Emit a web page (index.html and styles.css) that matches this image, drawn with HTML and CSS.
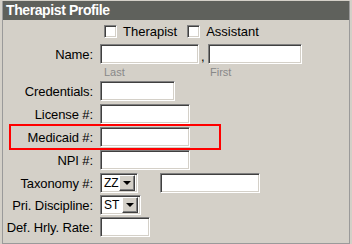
FILE: index.html
```html
<!DOCTYPE html>
<html lang="en">
<head>
  <meta charset="UTF-8" />
  <title>Therapist Profile</title>
  <link rel="stylesheet" href="styles.css">
</head>
<body>
  <div class="panel">
    <div class="panel-head">Therapist Profile</div>

    <div class="panel-body">
      <!-- Role checkboxes -->
      <div class="checks">
        <label class="check"><input type="checkbox" /> Therapist</label>
        <label class="check"><input type="checkbox" /> Assistant</label>
      </div>

      <!-- Name -->
      <div class="row row-name">
        <span class="lbl">Name:</span>
        <input type="text" class="txt w-last" />
        <span class="comma">,</span>
        <input type="text" class="txt w-first" />
      </div>
      <div class="hints">
        <span class="hint-last">Last</span>
        <span class="hint-first">First</span>
      </div>

      <div class="row">
        <span class="lbl">Credentials:</span>
        <input type="text" class="txt w-cred" />
      </div>
      <div class="row">
        <span class="lbl">License #:</span>
        <input type="text" class="txt w-num" />
      </div>
      <div class="row flag">
        <span class="lbl">Medicaid #:</span>
        <input type="text" class="txt w-num" />
      </div>
      <div class="row">
        <span class="lbl">NPI #:</span>
        <input type="text" class="txt w-num" />
      </div>
      <div class="row">
        <span class="lbl">Taxonomy #:</span>
        <span class="combo w-tax"><span class="val">ZZ</span><span class="drop"></span></span>
        <input type="text" class="txt w-taxcode" />
      </div>
      <div class="row tight">
        <span class="lbl">Pri. Discipline:</span>
        <span class="combo w-disc"><span class="val">ST</span><span class="drop"></span></span>
      </div>
      <div class="row tight">
        <span class="lbl">Def. Hrly. Rate:</span>
        <input type="text" class="txt w-rate" />
      </div>
    </div>
  </div>
</body>
</html>
```

FILE: styles.css
```css
:root {
  --face: #d4d0c8;
  --head: #5f615c;
  --frame: #9a9a9a;
  --flag: #ff0000;
}

* {
  box-sizing: border-box;
  margin: 0;
}

body {
  background: var(--face);
  font-family: 'Liberation Sans', Arial, sans-serif;
  font-size: 13px;
  color: #000;
  padding: 0 2px 1px 2px;
}

.panel {
  border: 1px solid var(--frame);
  border-top: none;
  height: 243px;
}

.panel-head {
  background: var(--head);
  color: #fff;
  font-weight: bold;
  font-size: 14px;
  letter-spacing: -0.4px;
  height: 19px;
  line-height: 19px;
  margin-top: 1px;
  padding-left: 3px;
}

.panel-body {
  padding-top: 5px;
}

/* checkboxes */
.checks {
  display: flex;
  gap: 10px;
  padding-left: 101px;
  height: 13px;
  align-items: center;
}

.check {
  display: flex;
  align-items: center;
  gap: 6px;
}

.check input {
  appearance: none;
  width: 13px;
  height: 13px;
  background: #fff;
  border: 1px solid;
  border-color: #808080 #fff #fff #808080;
  box-shadow: inset 1px 1px #404040, inset -1px -1px var(--face);
}

/* rows */
.row {
  display: flex;
  align-items: center;
  height: 20px;
  margin-top: 3px;
}

.row.row-name {
  margin-top: 6px;
}

.row.tight {
  margin-top: 2px;
}

.lbl {
  width: 90px;
  text-align: right;
  margin-right: 7px;
  white-space: nowrap;
  letter-spacing: -0.1px;
}

.row.flag {
  margin-left: 9px;
  width: 206px;
  outline: 2px solid var(--flag);
  outline-offset: 1px;
}

.row.flag .lbl {
  width: 81px;
}

.txt {
  height: 20px;
  background: #fff;
  border: 1px solid;
  border-color: #808080 #fff #fff #808080;
  box-shadow: inset 1px 1px #404040, inset -1px -1px var(--face);
  font: inherit;
  padding: 0 3px;
  outline: none;
}

.w-last { width: 99px; }
.w-first { width: 94px; }
.w-cred { width: 75px; }
.w-num { width: 90px; }
.w-taxcode { width: 100px; margin-left: 22px; }
.w-rate { width: 50px; }

.comma {
  width: 9px;
  align-self: flex-end;
  padding-left: 2px;
  line-height: 14px;
}

.hints {
  display: flex;
  font-size: 11px;
  color: #888;
  height: 14px;
  align-items: center;
  padding-top: 2px;
}

.hint-last { margin-left: 101px; width: 106px; }

/* combo boxes */
.combo {
  display: flex;
  align-items: center;
  height: 20px;
  background: #fff;
  border: 1px solid;
  border-color: #808080 #fff #fff #808080;
  box-shadow: inset 1px 1px #404040, inset -1px -1px var(--face);
  padding: 1px 2px 1px 2px;
}

.combo .val {
  flex: 1;
  padding-left: 1px;
  line-height: 14px;
  font-size: 12px;
}

.w-tax { width: 38px; }
.w-disc { width: 41px; }

.drop {
  width: 16px;
  height: 16px;
  flex: none;
  background: var(--face);
  border: 1px solid;
  border-color: #fff #404040 #404040 #fff;
  box-shadow: inset -1px -1px #808080;
  position: relative;
}

.drop::after {
  content: "";
  position: absolute;
  left: 3px;
  top: 5px;
  border-left: 4px solid transparent;
  border-right: 4px solid transparent;
  border-top: 4px solid #000;
}
```
